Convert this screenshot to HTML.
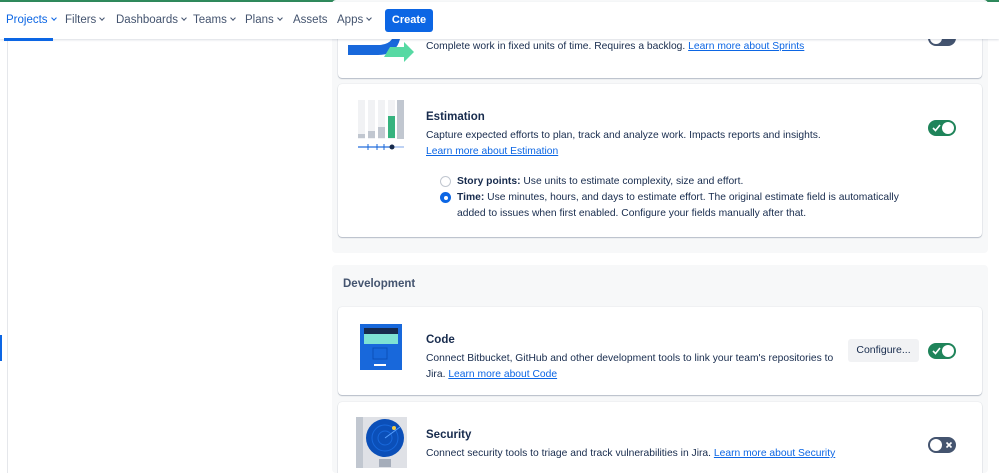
<!DOCTYPE html>
<html style="overflow:hidden"><head><meta charset="utf-8"><style>
*{box-sizing:border-box;margin:0;padding:0}
html,body{width:999px;height:473px;overflow:hidden}
body{background:#fff;font-family:"Liberation Sans",sans-serif;color:#172b4d;position:relative;font-size:10.3px}
.top{position:absolute;left:0;top:0;width:999px;height:2px;background:#2f8a5c}
.hdr{position:absolute;left:0;top:2px;width:999px;height:37px;background:#fff;box-shadow:0 1px 2px rgba(9,30,66,.15);z-index:5}
.nav{position:absolute;top:12px;font-size:11.5px;color:#44546f}
.nav.a{color:#0c66e4}
.chev{display:inline-block;width:4px;height:4px;border-right:1.3px solid currentColor;border-bottom:1.3px solid currentColor;transform:rotate(45deg);margin-left:4px;position:relative;top:-3px}
.uline{position:absolute;left:4px;top:36px;width:49px;height:3px;background:#0c66e4}
.create{position:absolute;left:385px;top:7px;width:48px;height:23px;background:#0c66e4;border-radius:3px;color:#fff;font-size:11px;font-weight:bold;text-align:center;line-height:23px}
.vline{position:absolute;left:7px;top:39px;width:1px;height:434px;background:#e5e7eb}
.mark{position:absolute;left:0;top:335px;width:2px;height:26px;background:#0c66e4}
.panel{position:absolute;left:332px;width:656px;background:#f7f8f9;border-radius:4px}
.card{position:absolute;left:338px;width:644px;background:#fff;border-radius:4px;box-shadow:0 1px 1px rgba(9,30,66,.25),0 0 1px rgba(9,30,66,.2)}
.t{position:absolute;font-size:10.3px;color:#172b4d;line-height:16px}
.h{font-size:11.5px;font-weight:bold;color:#172b4d}
a{color:#0c66e4;text-decoration:underline}
.tog{position:absolute;width:28px;height:16px;border-radius:8px}
.tog.on{background:#1f845a}
.tog.off{background:#44546f}
.knob{position:absolute;top:2px;width:12px;height:12px;border-radius:50%;background:#fff}
.radio{position:absolute;width:11px;height:11px;border-radius:50%}
</style></head><body>
<div class="top"></div>
<div class="hdr">
<span class="nav a" style="left:6px">Projects<span class="chev"></span></span>
<span class="nav" style="left:65px">Filters<span class="chev"></span></span>
<span class="nav" style="left:116px">Dashboards<span class="chev"></span></span>
<span class="nav" style="left:193px">Teams<span class="chev"></span></span>
<span class="nav" style="left:245px">Plans<span class="chev"></span></span>
<span class="nav" style="left:293px">Assets</span>
<span class="nav" style="left:337px">Apps<span class="chev"></span></span>
<div class="uline"></div>
<div class="create">Create</div>
</div>
<div class="vline"></div><div class="mark"></div>

<div class="panel" style="top:0;height:253px"></div>
<div class="panel" style="top:265px;height:208px"></div>

<div class="card" style="top:10px;height:68px"></div>
<svg style="position:absolute;left:348px;top:39px" width="70" height="24"><path d="M0 6 L30 6 Q40 6 44 0 L52 0 Q48 16 30 16 L0 16Z" fill="#1868db"/><path d="M42 8 L56 8 L56 3 L66 13 L56 23 L56 18 L36 18Z" fill="#57d9a3"/></svg>
<div class="t" style="left:426px;top:39px">Complete work in fixed units of time. Requires a backlog. <a>Learn more about Sprints</a></div>
<div class="tog off" style="left:928px;top:30px"><div class="knob" style="left:2px"></div></div>

<div class="card" style="top:84px;height:153px"></div>
<svg style="position:absolute;left:356px;top:98px" width="52" height="54">
<rect x="2" y="2" width="7" height="39" fill="#f1f2f4"/><rect x="2" y="36" width="7" height="4" fill="#c1c7d0"/>
<rect x="12" y="2" width="7" height="39" fill="#f1f2f4"/><rect x="12" y="33" width="7" height="7" fill="#c1c7d0"/>
<rect x="22" y="2" width="7" height="39" fill="#f1f2f4"/><rect x="22" y="29" width="7" height="11" fill="#c1c7d0"/>
<rect x="32" y="2" width="7" height="39" fill="#f1f2f4"/><rect x="32" y="18" width="7" height="22" fill="#36b37e"/>
<rect x="41" y="2" width="7" height="39" fill="#c1c7d0"/>
<line x1="2" y1="49" x2="48" y2="49" stroke="#a8c4f0" stroke-width="1.5"/>
<line x1="2" y1="49" x2="36" y2="49" stroke="#1868db" stroke-width="1"/>
<g stroke="#1868db"><line x1="12" y1="46" x2="12" y2="52"/><line x1="21" y1="46" x2="21" y2="52"/><line x1="28" y1="46" x2="28" y2="52"/></g>
<circle cx="36" cy="49" r="2.5" fill="#172b4d"/></svg>
<div class="t h" style="left:426px;top:109px">Estimation</div>
<div class="t" style="left:426px;top:128px">Capture expected efforts to plan, track and analyze work. Impacts reports and insights.<br><a>Learn more about Estimation</a></div>
<div class="tog on" style="left:928px;top:120px"><svg style="position:absolute;left:4px;top:4px" width="9" height="8"><path d="M1 4 L3.5 6.5 L8 1" stroke="#fff" stroke-width="1.6" fill="none"/></svg><div class="knob" style="left:14px"></div></div>
<div class="radio" style="left:440px;top:176px;border:1px solid #c1c7d0"></div>
<div class="t" style="left:457px;top:174px"><b>Story points:</b> Use units to estimate complexity, size and effort.</div>
<div class="radio" style="left:440px;top:192px;background:#0c66e4"><div style="position:absolute;left:3.5px;top:3.5px;width:4px;height:4px;border-radius:50%;background:#fff"></div></div>
<div class="t" style="left:457px;top:190px;width:445px"><b>Time:</b> Use minutes, hours, and days to estimate effort. The original estimate field is automatically added to issues when first enabled. Configure your fields manually after that.</div>

<div class="t" style="left:343px;top:276px;font-size:11.5px;font-weight:bold;color:#44546f">Development</div>

<div class="card" style="top:307px;height:88px"></div>
<svg style="position:absolute;left:360px;top:324px" width="44" height="48"><rect x="0" y="0" width="42" height="46" fill="#1868db"/><rect x="4" y="4" width="34" height="16" fill="#172b4d"/><rect x="4" y="10" width="34" height="10" fill="#7ee2d4"/><rect x="13" y="24" width="14" height="11" fill="none" stroke="#0b4fb8"/><rect x="14" y="40" width="12" height="2" fill="#fff"/></svg>
<div class="t h" style="left:426px;top:332px">Code</div>
<div class="t" style="left:426px;top:351px">Connect Bitbucket, GitHub and other development tools to link your team's repositories to<br>Jira. <a>Learn more about Code</a></div>
<div style="position:absolute;left:848px;top:339px;width:71px;height:23px;background:#f1f2f4;border-radius:3px;font-size:10.5px;line-height:23px;text-align:center;color:#172b4d">Configure...</div>
<div class="tog on" style="left:928px;top:343px"><svg style="position:absolute;left:4px;top:4px" width="9" height="8"><path d="M1 4 L3.5 6.5 L8 1" stroke="#fff" stroke-width="1.6" fill="none"/></svg><div class="knob" style="left:14px"></div></div>

<div class="card" style="top:402px;height:80px"></div>
<svg style="position:absolute;left:356px;top:417px" width="52" height="52"><rect x="0" y="0" width="51" height="51" fill="#dfe1e6"/><rect x="0" y="0" width="7" height="51" fill="#c1c7d0"/><circle cx="29" cy="21" r="19" fill="#0b4fb8"/><circle cx="29" cy="21" r="13" fill="none" stroke="#1868db"/><circle cx="29" cy="21" r="7" fill="none" stroke="#1868db"/><line x1="29" y1="21" x2="44" y2="10" stroke="#57a0ff"/><circle cx="38" cy="11" r="2" fill="#f5cd47"/><rect x="23" y="42" width="12" height="8" fill="#a5adba"/></svg>
<div class="t h" style="left:426px;top:427px">Security</div>
<div class="t" style="left:426px;top:446px">Connect security tools to triage and track vulnerabilities in Jira. <a>Learn more about Security</a></div>
<div class="tog off" style="left:928px;top:437px"><div class="knob" style="left:2px"></div><svg style="position:absolute;left:17px;top:4px" width="8" height="8"><path d="M1.5 1.5 L6.5 6.5 M6.5 1.5 L1.5 6.5" stroke="#fff" stroke-width="1.6"/></svg></div>
</body></html>
